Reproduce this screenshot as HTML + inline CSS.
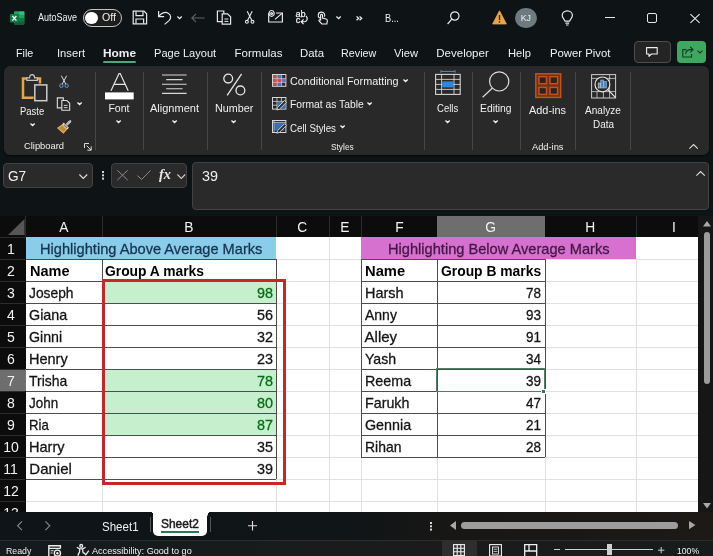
<!DOCTYPE html>
<html><head><meta charset="utf-8"><title>Excel</title>
<style>
*{box-sizing:border-box;margin:0;padding:0}
html,body{width:713px;height:556px;overflow:hidden;background:#0e1316;font-family:"Liberation Sans",sans-serif;color:#fff}
#app{will-change:transform;position:relative;width:713px;height:556px;overflow:hidden;background:#0e1316}
.a{position:absolute}
.t{position:absolute;white-space:nowrap;line-height:1;z-index:3}
svg{position:absolute;overflow:visible}
.sep{position:absolute;width:1px;background:#474747;top:72px;height:78px}
.fbox{position:absolute;background:#2a2a2a;border:1px solid #424242;border-radius:4px}
.gh{position:absolute;background:#e1e1e1;height:1px}
.gv{position:absolute;background:#e1e1e1;width:1px}
.bh{position:absolute;background:#4c4e4c;height:1.1px}
.bv{position:absolute;background:#4c4e4c;width:1.1px}
</style></head><body><div id="app">
<!-- ===== TITLE BAR ===== -->
<!-- excel logo -->
<svg style="left:10px;top:10.8px" width="14.8" height="14.4" viewBox="0 0 16 16" preserveAspectRatio="none">
  <rect x="4.5" y="0.5" width="11" height="14.5" rx="1.2" fill="#21a366"/>
  <rect x="4.5" y="0.5" width="5.5" height="3.7" fill="#21a366"/>
  <rect x="10" y="0.5" width="5.5" height="3.7" fill="#33c481"/>
  <rect x="4.5" y="4.2" width="5.5" height="3.6" fill="#107c41"/>
  <rect x="10" y="4.2" width="5.5" height="3.6" fill="#21a366"/>
  <rect x="4.5" y="7.8" width="5.5" height="3.6" fill="#185c37"/>
  <rect x="10" y="7.8" width="5.5" height="3.6" fill="#107c41"/>
  <rect x="4.5" y="11.4" width="11" height="3.6" fill="#185c37"/>
  <rect x="0" y="3.2" width="9.5" height="9.5" rx="1" fill="#107c41"/>
  <path d="M2.6 5.4 L6.9 10.6 M6.9 5.4 L2.6 10.6" stroke="#fff" stroke-width="1.4" fill="none"/>
</svg>
<!-- autosave toggle -->
<div class="a" style="left:82.5px;top:9.3px;width:39px;height:17.8px;border:1px solid #c4c4c4;border-radius:9px;background:#1d1d1d"></div>
<div class="a" style="left:85.2px;top:12px;width:12.6px;height:12.4px;border-radius:50%;background:#fff"></div>
<!-- save -->
<svg style="left:132px;top:10px" width="16" height="15" viewBox="0 0 16 15" fill="none" stroke="#e8e8e8" stroke-width="1.2">
  <path d="M1.2 1.2 H12 L14.6 3.8 V13.8 H1.2 Z"/>
  <path d="M4 1.4 V5.6 H11 V1.4"/>
  <path d="M4 13.6 V9 H11.6 V13.6"/>
</svg>
<!-- undo -->
<svg style="left:157px;top:10px" width="16" height="15" viewBox="0 0 16 15" fill="none" stroke="#e8e8e8" stroke-width="1.2">
  <path d="M1.6 1 V6.6 H7.2"/>
  <path d="M1.9 6.3 C4 3 8 1.4 11.2 3.2 C14.4 5 14.2 8.6 12 10.6 L7.6 14.4"/>
</svg>
<svg style="left:176.6px;top:16px" width="5.2" height="3.6" viewBox="0 0 6 4" fill="none" stroke="#f0f0f0" stroke-width="1.5"><path d="M0.5 0.6 L3 3 L5.5 0.6"/></svg>
<!-- back arrow (dim) -->
<svg style="left:191px;top:13px" width="14" height="10" viewBox="0 0 14 10" fill="none" stroke="#5e6366" stroke-width="1.1"><path d="M13.6 5 H0.9 M5 0.8 L0.8 5 L5 9.2"/></svg>
<!-- copy/paste doc -->
<svg style="left:216px;top:10px" width="16" height="15" viewBox="0 0 16 15" fill="none" stroke="#e8e8e8" stroke-width="1.2">
  <path d="M6 11.6 H1.4 V1 H7.8 V3.4"/>
  <path d="M6.2 3.8 H11.6 L14.6 6.8 V14.2 H6.2 Z"/>
  <path d="M8.4 9 H12.4 M8.4 11.4 H12.4" stroke-width="1"/>
</svg>
<!-- scissors -->
<svg style="left:245px;top:11.4px" width="9.4" height="13" viewBox="0 0 9.4 13" fill="none" stroke="#e8e8e8" stroke-width="1.1">
  <path d="M2.2 0.3 L6.9 9.4 M7.2 0.3 L2.5 9.4"/>
  <circle cx="1.9" cy="10.8" r="1.45"/><circle cx="7.5" cy="10.8" r="1.45"/>
</svg>
<!-- email -->
<svg style="left:268px;top:10px" width="15" height="13" viewBox="0 0 15 13" fill="none" stroke="#e8e8e8" stroke-width="1.2">
  <path d="M0.7 3 V12 H14.4 V3 H8"/>
  <path d="M7 9.4 L14 3.4"/>
  <ellipse cx="3.6" cy="3.4" rx="2.6" ry="2.9"/>
  <circle cx="3.6" cy="3.6" r="0.9"/>
</svg>
<!-- abc spelling -->
<div class="t" style="left:295.6px;top:9.6px;font-size:9.2px;color:#f0f0f0;letter-spacing:-0.3px;-webkit-text-stroke:0.25px #f0f0f0">ab</div>
<div class="t" style="left:295.8px;top:16.4px;font-size:9.2px;color:#f0f0f0;-webkit-text-stroke:0.25px #f0f0f0">c</div>
<svg style="left:300.4px;top:16px" width="8.4" height="9" viewBox="0 0 9 10" fill="none" stroke="#f0f0f0" stroke-width="1.3">
  <path d="M6.5 0 C8.6 2 8.4 5.6 5.2 6.4 H1.4 M3.8 3.8 L1.2 6.4 L3.8 9"/>
</svg>
<!-- touch -->
<svg style="left:317.4px;top:10.6px" width="11.2" height="14" viewBox="0 0 13 15" fill="none" stroke="#f0f0f0" stroke-width="1.3">
  <path d="M3.2 7.8 C0.2 5.6 1 0.8 5 0.7 C8.6 0.6 9.8 4 8.4 6"/>
  <path d="M4.2 10.4 V4.4 C4.2 3 6.4 3 6.4 4.4 V7.6 L10.6 8.6 C12 9 12.2 10 12 11.2 L11.4 14.4 H5.6 L2.4 10.8 C1.8 9.8 3.2 9.2 4.2 10.4"/>
</svg>
<svg style="left:336px;top:16px" width="5.2" height="3.6" viewBox="0 0 6 4" fill="none" stroke="#f0f0f0" stroke-width="1.5"><path d="M0.5 0.6 L3 3 L5.5 0.6"/></svg>
<svg style="left:355.6px;top:16.2px" width="6.6" height="4.6" viewBox="0 0 7 5" fill="none" stroke="#f0f0f0" stroke-width="1.4"><path d="M0.5 0.4 L2.8 2.5 L0.5 4.6 M3.8 0.4 L6.1 2.5 L3.8 4.6"/></svg>
<!-- search -->
<svg style="left:447px;top:11px" width="13" height="14" viewBox="0 0 13 14" fill="none" stroke="#e8e8e8" stroke-width="1.2">
  <circle cx="7.8" cy="5" r="4.2"/><path d="M4.8 8.2 L0.6 13"/>
</svg>
<!-- warning -->
<svg style="left:492px;top:10px" width="15" height="15" viewBox="0 0 15 15">
  <path d="M7.5 0.8 L14.4 14 H0.6 Z" fill="#eaa646" stroke="#eaa646" stroke-width="0.8" stroke-linejoin="round"/>
  <rect x="6.8" y="5" width="1.4" height="5.2" fill="#3a2a10"/><rect x="6.8" y="11.2" width="1.4" height="1.5" fill="#3a2a10"/>
</svg>
<!-- avatar -->
<div class="a" style="left:515.3px;top:7.6px;width:21.4px;height:20.8px;border-radius:50%;background:#6d7b80"></div>
<!-- lightbulb -->
<svg style="left:561px;top:10px" width="13" height="16" viewBox="0 0 13 16" fill="none" stroke="#e8e8e8" stroke-width="1.2">
  <path d="M4 11.2 C3.6 9 1.2 8.2 1.2 5.6 C1.2 2.8 3.4 0.8 6.3 0.8 C9.2 0.8 11.4 2.8 11.4 5.6 C11.4 8.2 9 9 8.6 11.2 Z"/>
  <path d="M4.4 13.2 H8.2 M5 15 H7.6"/>
</svg>
<!-- window controls -->
<div class="a" style="left:604.5px;top:16.8px;width:10px;height:1.1px;background:#e8e8e8"></div>
<div class="a" style="left:646.6px;top:13.1px;width:10.4px;height:9.8px;border:1.2px solid #e8e8e8;border-radius:2px"></div>
<svg style="left:690px;top:13.5px" width="10" height="9" viewBox="0 0 10 9" fill="none" stroke="#e8e8e8" stroke-width="1.1"><path d="M0.4 0.2 L9.6 8.8 M9.6 0.2 L0.4 8.8"/></svg>

<!-- ===== TABS ===== -->
<div class="a" style="left:103px;top:61.1px;width:33.2px;height:1.9px;background:#53a478;border-radius:1px"></div>
<div class="a" style="left:633.5px;top:41.4px;width:37.5px;height:21.6px;border:1px solid #4e4e4e;border-radius:4px;background:#242424"></div>
<svg style="left:646px;top:47px" width="12" height="10" viewBox="0 0 12 10" fill="none" stroke="#f0f0f0" stroke-width="1.1"><path d="M0.6 0.6 H11.2 V7 H5.4 L3 9.4 V7 H0.6 Z" stroke-linejoin="round"/></svg>
<div class="a" style="left:677.4px;top:41.4px;width:28.2px;height:21.6px;border-radius:4px;background:#3fa860"></div>
<svg style="left:682px;top:46px" width="12" height="12" viewBox="0 0 12 12" fill="none" stroke="#143a22" stroke-width="1.1"><path d="M4.4 3.6 H0.8 V11 H9.6 V8"/><path d="M3.6 8 C4 5.4 6 3.6 8.6 3.6 H10.6 M8.2 0.8 L11 3.6 L8.2 6.4"/></svg>
<svg style="left:696.5px;top:50px" width="6" height="4" viewBox="0 0 6 4" fill="none" stroke="#143a22" stroke-width="1.1"><path d="M0.5 0.6 L3 3 L5.5 0.6"/></svg>

<!-- ===== RIBBON ===== -->
<div class="a" style="left:3.5px;top:66.3px;width:705.5px;height:88.4px;background:#292929;border-radius:6px;box-shadow:0 1px 2px rgba(0,0,0,.55)"></div>
<div class="sep" style="left:94.5px"></div>
<div class="sep" style="left:143px"></div>
<div class="sep" style="left:206.8px"></div>
<div class="sep" style="left:261.2px"></div>
<div class="sep" style="left:423.6px"></div>
<div class="sep" style="left:471.6px"></div>
<div class="sep" style="left:519.6px"></div>
<div class="sep" style="left:575.4px"></div>
<div class="sep" style="left:630.4px"></div>
<!-- paste icon -->
<svg style="left:20px;top:72px" width="29" height="31" viewBox="0 0 29 31" fill="none">
  <path d="M7.4 6.6 H3 V25.8 H13.6" stroke="#e6a646" stroke-width="2.5"/>
  <path d="M16.6 6.6 H20 V11.6" stroke="#e6a646" stroke-width="2.5"/>
  <path d="M6.8 8.4 V5.8 H9.6 C9.6 1.6 14.6 1.6 14.6 5.8 H17.4 V8.4 Z" stroke="#c4c4c4" stroke-width="1.2" fill="#292929"/>
  <rect x="14.8" y="12.9" width="12" height="15.8" stroke="#cccccc" stroke-width="1.5" fill="#292929"/>
</svg>
<svg style="left:29.5px;top:123px" width="5.2" height="3.4" viewBox="0 0 6 4" fill="none" stroke="#f2f2f2" stroke-width="1.6"><path d="M0.5 0.6 L3 3 L5.5 0.6"/></svg>
<!-- scissors small -->
<svg style="left:58.6px;top:74.6px" width="10" height="13.4" viewBox="0 0 11 14" fill="none" stroke-width="1.1">
  <path d="M2.6 0.4 L7.6 10 M8.4 0.4 L3.4 10" stroke="#dcdcdc"/>
  <circle cx="2.6" cy="11.4" r="1.9" stroke="#5aa0d8"/><circle cx="8.4" cy="11.4" r="1.9" stroke="#5aa0d8"/>
</svg>
<!-- copy small -->
<svg style="left:55.6px;top:96.6px" width="15" height="14" viewBox="0 0 16 15" fill="none" stroke="#dcdcdc" stroke-width="1.2">
  <path d="M6 11.6 H1.4 V1 H7.8 V3.4"/>
  <path d="M6.2 3.8 H11.6 L14.6 6.8 V14.2 H6.2 Z"/>
  <path d="M8.4 9 H12.4 M8.4 11.4 H12.4" stroke-width="1"/>
</svg>
<svg style="left:77.3px;top:102.3px" width="5.2" height="3.4" viewBox="0 0 6 4" fill="none" stroke="#f2f2f2" stroke-width="1.6"><path d="M0.5 0.6 L3 3 L5.5 0.6"/></svg>
<!-- format painter -->
<svg style="left:56.5px;top:119.5px" width="14.5" height="13.5" viewBox="0 0 15 14" fill="none" stroke-width="1.1">
  <path d="M9.4 4.6 L13 1 C13.8 0.2 14.8 1.2 14 2 L10.4 5.6" stroke="#dcdcdc"/>
  <path d="M7 3.4 L11.6 8 L10.4 9.2 L5.8 4.6 Z" stroke="#dcdcdc"/>
  <path d="M5.4 5 L0.8 8.4 L6.6 13.4 L10 9.6 Z" stroke="#e6b04e" fill="#e6b04e" fill-opacity="0.75"/>
</svg>
<!-- dialog launcher -->
<svg style="left:84px;top:143px" width="8" height="8" viewBox="0 0 8 8" fill="none" stroke="#dcdcdc" stroke-width="1"><path d="M0.5 5 V0.5 H5 M2.6 2.6 L7 7 M7.2 3.4 V7.2 H3.4"/></svg>
<!-- font icon -->
<svg style="left:104.6px;top:72.5px" width="29" height="27" viewBox="0 0 29 27" fill="none">
  <path d="M6 17.8 L14 0.6 H15.2 L23.2 17.8 M9.2 11.4 H20" stroke="#e6e6e6" stroke-width="1.2"/>
  <rect x="0" y="19.4" width="28.7" height="7" fill="#ffffff"/>
</svg>
<svg style="left:116.2px;top:120.2px" width="5.2" height="3.4" viewBox="0 0 6 4" fill="none" stroke="#f2f2f2" stroke-width="1.6"><path d="M0.5 0.6 L3 3 L5.5 0.6"/></svg>
<!-- alignment icon -->
<svg style="left:162.4px;top:74px" width="25" height="21" viewBox="0 0 25 21" fill="none" stroke="#d8d8d8" stroke-width="1.1">
  <path d="M0 1 H24.6 M4.2 5.6 H20.6 M0 10.2 H24.6 M4.2 14.8 H20.6 M0 19.4 H24.6"/>
</svg>
<svg style="left:171.8px;top:120.2px" width="5.2" height="3.4" viewBox="0 0 6 4" fill="none" stroke="#f2f2f2" stroke-width="1.6"><path d="M0.5 0.6 L3 3 L5.5 0.6"/></svg>
<!-- number % -->
<svg style="left:223px;top:73px" width="23" height="23" viewBox="0 0 23 23" fill="none" stroke="#e6e6e6" stroke-width="1.3">
  <circle cx="5.2" cy="5.6" r="4.4"/><circle cx="17.4" cy="17.4" r="4.4"/><path d="M18.6 0.8 L4.2 22.4"/>
</svg>
<svg style="left:231.4px;top:120.2px" width="5.2" height="3.4" viewBox="0 0 6 4" fill="none" stroke="#f2f2f2" stroke-width="1.6"><path d="M0.5 0.6 L3 3 L5.5 0.6"/></svg>
<!-- conditional formatting icon -->
<svg style="left:271.8px;top:73.8px" width="14.4" height="12.8" viewBox="0 0 14.4 12.8" fill="none">
  <rect x="0.5" y="0.5" width="13.4" height="11.8" stroke="#d8d8d8" stroke-width="1" fill="#2f2f2f"/>
  <rect x="1" y="1" width="4" height="3.4" fill="#d64550"/><rect x="5.4" y="1" width="4" height="3.4" fill="#4a78c0"/>
  <rect x="1" y="4.8" width="4" height="3.4" fill="#d64550"/><rect x="5.4" y="4.8" width="4" height="3.4" fill="#d64550"/><rect x="9.8" y="4.8" width="3.6" height="3.4" fill="#4a78c0"/>
  <rect x="1" y="8.6" width="4" height="3.2" fill="#d64550"/><rect x="5.4" y="8.6" width="4" height="3.2" fill="#4a78c0"/>
  <path d="M5.2 0.5 V12.3 M9.6 0.5 V12.3 M0.5 4.6 H13.9 M0.5 8.4 H13.9" stroke="#d8d8d8" stroke-width="0.7"/>
</svg>
<svg style="left:402.7px;top:78.6px" width="5.2" height="3.4" viewBox="0 0 6 4" fill="none" stroke="#f2f2f2" stroke-width="1.6"><path d="M0.5 0.6 L3 3 L5.5 0.6"/></svg>
<!-- format as table icon -->
<svg style="left:271.8px;top:97.2px" width="14.4" height="13" viewBox="0 0 14.4 13" fill="none">
  <rect x="0.5" y="0.5" width="13.4" height="11.6" stroke="#d8d8d8" stroke-width="1"/>
  <path d="M5 0.5 V12 M9.4 0.5 V6 M0.5 4.4 H13.9 M0.5 8.2 H8" stroke="#d8d8d8" stroke-width="0.8"/>
  <rect x="5.4" y="4.8" width="8" height="6.8" fill="#3b78c4" fill-opacity="0.9"/>
  <path d="M12.6 3.6 L14.4 5.4 L7.4 12.2 L4.8 13 L5.6 10.4 Z" fill="#292929" stroke="#e0e0e0" stroke-width="0.9"/>
</svg>
<svg style="left:367.3px;top:101.6px" width="5.2" height="3.4" viewBox="0 0 6 4" fill="none" stroke="#f2f2f2" stroke-width="1.6"><path d="M0.5 0.6 L3 3 L5.5 0.6"/></svg>
<!-- cell styles icon -->
<svg style="left:271.8px;top:120.2px" width="14.4" height="13.4" viewBox="0 0 14.4 13.4" fill="none">
  <rect x="0.5" y="0.5" width="13.4" height="12" stroke="#d8d8d8" stroke-width="1"/>
  <rect x="2.2" y="2.6" width="10" height="8" fill="#3b78c4" fill-opacity="0.9"/>
  <path d="M0.5 2.4 H13.9 M2 0.5 V12.5" stroke="#d8d8d8" stroke-width="0.7"/>
  <path d="M12.6 3.8 L14.4 5.6 L7.4 12.4 L4.8 13.2 L5.6 10.6 Z" fill="#292929" stroke="#e0e0e0" stroke-width="0.9"/>
</svg>
<svg style="left:340.3px;top:125px" width="5.2" height="3.4" viewBox="0 0 6 4" fill="none" stroke="#f2f2f2" stroke-width="1.6"><path d="M0.5 0.6 L3 3 L5.5 0.6"/></svg>
<!-- cells icon -->
<svg style="left:435px;top:70px" width="26" height="25" viewBox="0 0 26 25" fill="none">
  <path d="M6 1.4 H20 M6 0 V2.8 M20 0 V2.8" stroke="#4a9be0" stroke-width="0.9"/>
  <rect x="0.6" y="4.4" width="24.6" height="20" stroke="#d4d4d4" stroke-width="1.1"/>
  <path d="M0.6 9.4 H25.2 M0.6 14.4 H25.2 M0.6 19.4 H25.2 M6.6 4.4 V24.4 M19 4.4 V24.4" stroke="#d4d4d4" stroke-width="0.9"/>
  <rect x="7.2" y="11.4" width="11" height="6" fill="#2f86dc"/>
</svg>
<svg style="left:444.8px;top:120.2px" width="5.2" height="3.4" viewBox="0 0 6 4" fill="none" stroke="#f2f2f2" stroke-width="1.6"><path d="M0.5 0.6 L3 3 L5.5 0.6"/></svg>
<!-- editing icon -->
<svg style="left:482px;top:71px" width="28" height="27" viewBox="0 0 28 27" fill="none" stroke="#dcdcdc" stroke-width="1.2">
  <circle cx="17.2" cy="10.4" r="9.6"/><path d="M10.2 17.2 L0.6 26.2"/>
</svg>
<svg style="left:492.8px;top:120.2px" width="5.2" height="3.4" viewBox="0 0 6 4" fill="none" stroke="#f2f2f2" stroke-width="1.6"><path d="M0.5 0.6 L3 3 L5.5 0.6"/></svg>
<!-- add-ins icon -->
<svg style="left:535px;top:73.4px" width="26.5" height="25.2" viewBox="0 0 26.5 25.2" fill="none" stroke="#c6501d" stroke-width="1.5">
  <rect x="0.8" y="0.8" width="24.9" height="23.6" fill="#6e3119"/>
  <rect x="3.9" y="3.7" width="7.6" height="7" fill="#2b2321"/><rect x="15" y="3.7" width="7.6" height="7" fill="#2b2321"/>
  <rect x="3.9" y="14.4" width="7.6" height="7" fill="#2b2321"/><rect x="15" y="14.4" width="7.6" height="7" fill="#2b2321"/>
</svg>
<!-- analyze data icon -->
<svg style="left:590.8px;top:73.6px" width="25.4" height="24.8" viewBox="0 0 25.4 24.8" fill="none">
  <rect x="0.6" y="0.6" width="24" height="23.4" stroke="#cfcfcf" stroke-width="1"/>
  <path d="M0.6 4.4 H24.6 M0.6 17.6 H24.6 M18.6 0.6 V24 M6 17.6 V24 M12.4 17.6 V24" stroke="#cfcfcf" stroke-width="0.8"/>
  <circle cx="11.4" cy="10.4" r="7.4" fill="#292929" stroke="#e4e4e4" stroke-width="1.2"/>
  <path d="M16.8 15.6 L24.6 23.6" stroke="#e4e4e4" stroke-width="1.3"/>
  <rect x="7.2" y="9" width="2.4" height="5" fill="#d8d8d8" fill-opacity="0.5" stroke="#d8d8d8" stroke-width="0.6"/>
  <rect x="9.8" y="6" width="2.6" height="8" fill="#3b86d8" stroke="#d8d8d8" stroke-width="0.5"/>
  <rect x="12.8" y="7.6" width="2.6" height="6.4" fill="#3b86d8" stroke="#d8d8d8" stroke-width="0.5"/>
</svg>
<svg style="left:689.3px;top:143.6px" width="9.2" height="5" viewBox="0 0 9.2 5" fill="none" stroke="#e0e0e0" stroke-width="1.1"><path d="M0.4 4.6 L4.6 0.6 L8.8 4.6"/></svg>

<!-- ===== FORMULA BAR ===== -->
<div class="fbox" style="left:3.4px;top:162.6px;width:89.8px;height:25.2px"></div>
<svg style="left:79.4px;top:173.8px" width="8.6" height="5" viewBox="0 0 8.6 5" fill="none" stroke="#e0e0e0" stroke-width="1.1"><path d="M0.4 0.5 L4.3 4.4 L8.2 0.5"/></svg>
<div class="a" style="left:101.5px;top:171px;width:2px;height:2px;background:#d8d8d8;box-shadow:0 3.3px 0 #d8d8d8,0 6.6px 0 #d8d8d8"></div>
<div class="fbox" style="left:111.4px;top:162.6px;width:75.8px;height:25.2px"></div>
<svg style="left:117.3px;top:170.2px" width="11" height="10.4" viewBox="0 0 11 10.4" fill="none" stroke="#8c8c8c" stroke-width="1"><path d="M0.3 0.3 L10.7 10.1 M10.7 0.3 L0.3 10.1"/></svg>
<svg style="left:136.6px;top:170.4px" width="14" height="10" viewBox="0 0 14 10" fill="none" stroke="#8c8c8c" stroke-width="1"><path d="M0.4 5.6 L4.6 9.4 L13.6 0.4"/></svg>
<svg style="left:176.7px;top:173.8px" width="8.6" height="5" viewBox="0 0 8.6 5" fill="none" stroke="#cfcfcf" stroke-width="1.1"><path d="M0.4 0.5 L4.3 4.4 L8.2 0.5"/></svg>
<div class="fbox" style="left:191.6px;top:162.4px;width:517px;height:47.6px"></div>
<svg style="left:696px;top:171px" width="9.2" height="5" viewBox="0 0 9.2 5" fill="none" stroke="#e0e0e0" stroke-width="1.1"><path d="M0.4 4.6 L4.6 0.6 L8.8 4.6"/></svg>

<!-- ===== GRID ===== -->
<div class="a" style="left:0;top:216px;width:713px;height:296px;background:#0c0c0c"></div>
<div class="a" style="left:26px;top:237px;width:672px;height:274.6px;background:#fff"></div>
<!-- header seps -->
<div class="a" style="left:25.4px;top:216px;width:1px;height:21px;background:#2c2c2c"></div>
<div class="a" style="left:101.6px;top:216px;width:1px;height:21px;background:#2c2c2c"></div>
<div class="a" style="left:275.6px;top:216px;width:1px;height:21px;background:#2c2c2c"></div>
<div class="a" style="left:328.8px;top:216px;width:1px;height:21px;background:#2c2c2c"></div>
<div class="a" style="left:360.8px;top:216px;width:1px;height:21px;background:#2c2c2c"></div>
<div class="a" style="left:636px;top:216px;width:1px;height:21px;background:#2c2c2c"></div>
<div class="a" style="left:437px;top:216px;width:108px;height:20.5px;background:#6e6e6e"></div>
<div class="a" style="left:0;top:369px;width:25.4px;height:22px;background:#6e6e6e"></div>
<div class="a" style="left:24.8px;top:369px;width:1.2px;height:22px;background:#4f8a68"></div>
<!-- select all triangle -->
<svg style="left:7.5px;top:219px" width="16.5" height="16" viewBox="0 0 18 14" preserveAspectRatio="none"><path d="M18 0 V14 H0 Z" fill="#565656"/></svg>
<!-- row header seps -->
<div id="rhs"></div>
<!-- fills -->
<div class="a" style="left:26.2px;top:237.4px;width:249.6px;height:21.6px;background:#8acdea"></div>
<div class="a" style="left:361.4px;top:237.4px;width:275px;height:21.6px;background:#d671cf"></div>
<div class="a" style="left:102px;top:281px;width:174px;height:22px;background:#c6efce"></div>
<div class="a" style="left:102px;top:369px;width:174px;height:66px;background:#c6efce"></div>
<div class="gh" style="left:26px;top:258.9px;width:672px"></div>
<div class="gh" style="left:26px;top:280.9px;width:672px"></div>
<div class="gh" style="left:26px;top:302.9px;width:672px"></div>
<div class="gh" style="left:26px;top:324.9px;width:672px"></div>
<div class="gh" style="left:26px;top:346.9px;width:672px"></div>
<div class="gh" style="left:26px;top:368.9px;width:672px"></div>
<div class="gh" style="left:26px;top:390.9px;width:672px"></div>
<div class="gh" style="left:26px;top:412.9px;width:672px"></div>
<div class="gh" style="left:26px;top:434.9px;width:672px"></div>
<div class="gh" style="left:26px;top:456.9px;width:672px"></div>
<div class="gh" style="left:26px;top:478.9px;width:672px"></div>
<div class="gh" style="left:26px;top:500.9px;width:672px"></div>
<div class="gv" style="left:101.5px;top:259px;height:252.6px"></div>
<div class="gv" style="left:275.5px;top:259px;height:252.6px"></div>
<div class="gv" style="left:328.5px;top:259px;height:252.6px"></div>
<div class="gv" style="left:360.5px;top:259px;height:252.6px"></div>
<div class="gv" style="left:436.5px;top:259px;height:252.6px"></div>
<div class="gv" style="left:544.5px;top:259px;height:252.6px"></div>
<div class="gv" style="left:635.5px;top:259px;height:252.6px"></div>
<div class="gv" style="left:328.5px;top:237px;height:22px"></div>
<div class="a" style="left:0;top:236.5px;width:25.4px;height:1px;background:#2c2c2c"></div>
<div class="a" style="left:0;top:258.5px;width:25.4px;height:1px;background:#2c2c2c"></div>
<div class="a" style="left:0;top:280.5px;width:25.4px;height:1px;background:#2c2c2c"></div>
<div class="a" style="left:0;top:302.5px;width:25.4px;height:1px;background:#2c2c2c"></div>
<div class="a" style="left:0;top:324.5px;width:25.4px;height:1px;background:#2c2c2c"></div>
<div class="a" style="left:0;top:346.5px;width:25.4px;height:1px;background:#2c2c2c"></div>
<div class="a" style="left:0;top:368.5px;width:25.4px;height:1px;background:#2c2c2c"></div>
<div class="a" style="left:0;top:390.5px;width:25.4px;height:1px;background:#2c2c2c"></div>
<div class="a" style="left:0;top:412.5px;width:25.4px;height:1px;background:#2c2c2c"></div>
<div class="a" style="left:0;top:434.5px;width:25.4px;height:1px;background:#2c2c2c"></div>
<div class="a" style="left:0;top:456.5px;width:25.4px;height:1px;background:#2c2c2c"></div>
<div class="a" style="left:0;top:478.5px;width:25.4px;height:1px;background:#2c2c2c"></div>
<div class="a" style="left:0;top:500.5px;width:25.4px;height:1px;background:#2c2c2c"></div>
<div class="bh" style="left:26px;top:258.7px;width:250px"></div>
<div class="bh" style="left:26px;top:280.7px;width:250px"></div>
<div class="bh" style="left:26px;top:302.7px;width:250px"></div>
<div class="bh" style="left:26px;top:324.7px;width:250px"></div>
<div class="bh" style="left:26px;top:346.7px;width:250px"></div>
<div class="bh" style="left:26px;top:368.7px;width:250px"></div>
<div class="bh" style="left:26px;top:390.7px;width:250px"></div>
<div class="bh" style="left:26px;top:412.7px;width:250px"></div>
<div class="bh" style="left:26px;top:434.7px;width:250px"></div>
<div class="bh" style="left:26px;top:456.7px;width:250px"></div>
<div class="bh" style="left:26px;top:478.7px;width:250px"></div>
<div class="bv" style="left:101.5px;top:259px;height:220px"></div>
<div class="bv" style="left:275.5px;top:259px;height:220px"></div>
<div class="bh" style="left:361px;top:258.7px;width:184px"></div>
<div class="bh" style="left:361px;top:280.7px;width:184px"></div>
<div class="bh" style="left:361px;top:302.7px;width:184px"></div>
<div class="bh" style="left:361px;top:324.7px;width:184px"></div>
<div class="bh" style="left:361px;top:346.7px;width:184px"></div>
<div class="bh" style="left:361px;top:368.7px;width:184px"></div>
<div class="bh" style="left:361px;top:390.7px;width:184px"></div>
<div class="bh" style="left:361px;top:412.7px;width:184px"></div>
<div class="bh" style="left:361px;top:434.7px;width:184px"></div>
<div class="bh" style="left:361px;top:456.7px;width:184px"></div>
<div class="bv" style="left:361.0px;top:259px;height:198px"></div>
<div class="bv" style="left:436.5px;top:259px;height:198px"></div>
<div class="bv" style="left:544.5px;top:259px;height:198px"></div>
<div class="a" style="left:102.2px;top:278.7px;width:184.2px;height:206.2px;border:3.2px solid #c9252d"></div>
<div class="a" style="left:436.4px;top:368.4px;width:109px;height:23.2px;border:1.3px solid #4f8064"></div>
<div class="a" style="left:541.4px;top:388.6px;width:5px;height:5px;background:#3f7457;border:0.6px solid #fff"></div>
<div class="a" style="left:698px;top:216px;width:15px;height:296px;background:#161616"></div>
<svg style="left:703.4px;top:220.6px" width="8" height="5.4" viewBox="0 0 8 5.4"><path d="M4 0 L8 5.4 H0 Z" fill="#a8a8a8"/></svg>
<div class="a" style="left:703.7px;top:231.7px;width:6.6px;height:152px;background:#9b9b9b;border-radius:3.3px"></div>
<svg style="left:703.2px;top:503.4px" width="8" height="5.4" viewBox="0 0 8 5.4"><path d="M0 0 H8 L4 5.4 Z" fill="#a8a8a8"/></svg>
<div class="a" style="left:0;top:511.6px;width:713px;height:28.4px;z-index:2;background:linear-gradient(90deg,#0e1417 0%,#101517 48%,#191715 66%,#1c1917 100%)"></div>
<div class="a" style="left:0;top:540px;width:713px;height:16px;z-index:2;border-top:1px solid #2b2d2e;background:linear-gradient(90deg,#141a1d 0%,#181b1c 35%,#1b1b1b 60%,#181b1c 100%)"></div>
<div class="a" style="z-index:2;left:153.2px;top:511px;width:53.8px;height:25.4px;background:#fff;border-radius:0 0 5px 5px"></div>
<div class="a" style="z-index:2;left:160.8px;top:530.8px;width:38px;height:2px;background:#2b7a52"></div>
<div class="a" style="z-index:2;left:149.8px;top:517.4px;width:1px;height:15px;background:#555"></div>
<div class="a" style="z-index:2;left:210px;top:517.4px;width:1px;height:15px;background:#555"></div>
<svg style="z-index:2;left:17.2px;top:520.6px" width="5.4" height="9.6" viewBox="0 0 5.4 9.6" fill="none" stroke="#8a8a8a" stroke-width="1.1"><path d="M5 0.4 L0.6 4.8 L5 9.2"/></svg>
<svg style="z-index:2;left:45.4px;top:520.6px" width="5.4" height="9.6" viewBox="0 0 5.4 9.6" fill="none" stroke="#8a8a8a" stroke-width="1.1"><path d="M0.4 0.4 L4.8 4.8 L0.4 9.2"/></svg>
<svg style="z-index:2;left:248.2px;top:520.6px" width="9" height="9.4" viewBox="0 0 9 9.4" fill="none" stroke="#e0e0e0" stroke-width="1.1"><path d="M4.5 0 V9.4 M0 4.7 H9"/></svg>
<div class="a" style="z-index:2;left:430.4px;top:522px;width:2px;height:2px;background:#d8d8d8;box-shadow:0 3.3px 0 #d8d8d8,0 6.6px 0 #d8d8d8"></div>
<svg style="z-index:2;left:450px;top:521px" width="6" height="9" viewBox="0 0 6 9"><path d="M6 0 V9 L0 4.5 Z" fill="#a8a8a8"/></svg>
<div class="a" style="z-index:2;left:461px;top:521.7px;width:217.4px;height:7.2px;background:#9d9d9d;border-radius:3.6px"></div>
<svg style="z-index:2;left:688.8px;top:521.2px" width="6.4" height="8.2" viewBox="0 0 6.4 8.2"><path d="M0 0 L6.4 4.1 L0 8.2 Z" fill="#a8a8a8"/></svg>
<svg style="z-index:2;left:47.8px;top:545px" width="14" height="12" viewBox="0 0 14 12" fill="none" stroke="#ececec" stroke-width="1.4"><path d="M0.8 11.4 V0.8 H12.4 V3.6 M0.8 3.4 H12.4"/><path d="M2.6 5.8 H5.6 M2.6 8 H4.6" stroke-width="1.1"/><circle cx="9.4" cy="8.2" r="3.1"/><circle cx="9.4" cy="8.2" r="1.2" fill="#ececec" stroke="none"/></svg>
<svg style="z-index:2;left:75.6px;top:544.2px" width="13.4" height="12" viewBox="0 0 13 12" fill="none" stroke="#ececec" stroke-width="1.3"><circle cx="5" cy="1.9" r="1.4"/><path d="M0.6 3.2 L3.4 4.8 H6.6 L9.4 3.2 M3.4 4.8 V7.8 L1.6 11.6 M6.6 4.8 V7.8 L7.4 9.4"/><path d="M7.8 8.8 L9.6 10.8 L12.6 6.6"/></svg>
<div class="a" style="z-index:2;left:442px;top:540.4px;width:35.4px;height:15.6px;background:#2e2e2e"></div>
<svg style="z-index:2;left:453.4px;top:544px" width="12" height="12" viewBox="0 0 12 12" fill="none" stroke="#f0f0f0" stroke-width="1.1"><rect x="0.6" y="0.6" width="10.8" height="11"/><path d="M4.2 0.6 V12 M7.8 0.6 V12 M0.6 4.2 H11.4 M0.6 7.8 H11.4"/></svg>
<svg style="z-index:2;left:488.8px;top:544px" width="13" height="12" viewBox="0 0 13 12" fill="none" stroke="#f0f0f0" stroke-width="1.1"><rect x="0.6" y="0.6" width="11.8" height="11.4"/><rect x="3.5" y="3" width="6" height="7" stroke-width="0.9"/><path d="M4.6 5.2 H8.4 M4.6 7.4 H8.4" stroke-width="0.8"/></svg>
<svg style="z-index:2;left:524.2px;top:544px" width="13.4" height="12" viewBox="0 0 13.4 12" fill="none" stroke="#f0f0f0" stroke-width="1.1"><path d="M0.7 12 V0.7 H12.7 V12 M0.7 7 H12.7 M5 0.7 V7" stroke-width="1.3"/></svg>
<div class="a" style="z-index:2;left:553.8px;top:549.2px;width:6.4px;height:1px;background:#cfcfcf"></div>
<div class="a" style="z-index:2;left:565.3px;top:549.2px;width:87.8px;height:1px;background:#cfcfcf"></div>
<div class="a" style="z-index:2;left:607.2px;top:544.4px;width:4.6px;height:11px;background:#cfcfcf"></div>
<svg style="z-index:2;left:658.2px;top:546.6px" width="6.4" height="6.4" viewBox="0 0 6.4 6.4" fill="none" stroke="#cfcfcf" stroke-width="1"><path d="M3.2 0 V6.4 M0 3.2 H6.4"/></svg>
<div class="a" style="z-index:2;left:148.7px;top:511.6px;width:4.5px;height:4.5px;background:radial-gradient(circle at 0% 100%,#0f1417 4.3px,#ffffff 4.8px)"></div>
<div class="a" style="z-index:2;left:207px;top:511.6px;width:4.5px;height:4.5px;background:radial-gradient(circle at 100% 100%,#0f1417 4.3px,#ffffff 4.8px)"></div>

<!-- TEXT -->
<div class="t" style="left:38.40px;top:13.43px;font-size:10px;color:#f0f0f0;transform:scaleX(0.8991);transform-origin:left center;">AutoSave</div>
<div class="t" style="left:102.00px;top:13.43px;font-size:10px;color:#f0f0f0;transform:scaleX(1.0641);transform-origin:left center;">Off</div>
<div class="t" style="left:384.50px;top:13.11px;font-size:10.5px;color:#f0f0f0;transform:scaleX(0.8817);transform-origin:left center;">B...</div>
<div class="t" style="left:520.66px;top:13.95px;font-size:8.8px;color:#eef2f3;">KJ</div>
<div class="t" style="left:15.50px;top:48.47px;font-size:11.5px;color:#f0f0f0;transform:scaleX(0.9336);transform-origin:left center;">File</div>
<div class="t" style="left:56.70px;top:48.47px;font-size:11.5px;color:#f0f0f0;transform:scaleX(0.9734);transform-origin:left center;">Insert</div>
<div class="t" style="left:103.00px;top:48.47px;font-size:11.5px;color:#f0f0f0;font-weight:bold;transform:scaleX(1.0328);transform-origin:left center;">Home</div>
<div class="t" style="left:153.50px;top:48.47px;font-size:11.5px;color:#f0f0f0;transform:scaleX(0.9629);transform-origin:left center;">Page Layout</div>
<div class="t" style="left:234.60px;top:48.47px;font-size:11.5px;color:#f0f0f0;">Formulas</div>
<div class="t" style="left:299.50px;top:48.47px;font-size:11.5px;color:#f0f0f0;transform:scaleX(0.9878);transform-origin:left center;">Data</div>
<div class="t" style="left:340.70px;top:48.47px;font-size:11.5px;color:#f0f0f0;transform:scaleX(0.9359);transform-origin:left center;">Review</div>
<div class="t" style="left:393.80px;top:48.47px;font-size:11.5px;color:#f0f0f0;transform:scaleX(0.9709);transform-origin:left center;">View</div>
<div class="t" style="left:436.30px;top:48.47px;font-size:11.5px;color:#f0f0f0;">Developer</div>
<div class="t" style="left:508.00px;top:48.47px;font-size:11.5px;color:#f0f0f0;transform:scaleX(0.9723);transform-origin:left center;">Help</div>
<div class="t" style="left:549.50px;top:48.47px;font-size:11.5px;color:#f0f0f0;transform:scaleX(0.9860);transform-origin:left center;">Power Pivot</div>
<div class="t" style="left:20.00px;top:105.71px;font-size:10.5px;color:#f0f0f0;transform:scaleX(0.9010);transform-origin:left center;">Paste</div>
<div class="t" style="left:23.60px;top:141.30px;font-size:9.8px;color:#f0f0f0;transform:scaleX(0.9538);transform-origin:left center;">Clipboard</div>
<div class="t" style="left:108.40px;top:103.11px;font-size:10.5px;color:#f0f0f0;">Font</div>
<div class="t" style="left:150.20px;top:103.11px;font-size:10.5px;color:#f0f0f0;transform:scaleX(1.0492);transform-origin:left center;">Alignment</div>
<div class="t" style="left:214.60px;top:103.11px;font-size:10.5px;color:#f0f0f0;transform:scaleX(1.0252);transform-origin:left center;">Number</div>
<div class="t" style="left:289.80px;top:75.81px;font-size:10.5px;color:#f0f0f0;transform:scaleX(1.0280);transform-origin:left center;">Conditional Formatting</div>
<div class="t" style="left:289.80px;top:99.11px;font-size:10.5px;color:#f0f0f0;transform:scaleX(0.9814);transform-origin:left center;">Format as Table</div>
<div class="t" style="left:289.80px;top:122.51px;font-size:10.5px;color:#f0f0f0;transform:scaleX(0.9272);transform-origin:left center;">Cell Styles</div>
<div class="t" style="left:330.70px;top:141.60px;font-size:9.8px;color:#f0f0f0;transform:scaleX(0.8506);transform-origin:left center;">Styles</div>
<div class="t" style="left:437.20px;top:103.11px;font-size:10.5px;color:#f0f0f0;transform:scaleX(0.9082);transform-origin:left center;">Cells</div>
<div class="t" style="left:479.90px;top:103.11px;font-size:10.5px;color:#f0f0f0;transform:scaleX(0.9841);transform-origin:left center;">Editing</div>
<div class="t" style="left:529.00px;top:104.91px;font-size:10.5px;color:#f0f0f0;transform:scaleX(1.0391);transform-origin:left center;">Add-ins</div>
<div class="t" style="left:531.70px;top:141.70px;font-size:9.8px;color:#f0f0f0;transform:scaleX(0.9483);transform-origin:left center;">Add-ins</div>
<div class="t" style="left:585.10px;top:105.01px;font-size:10.5px;color:#f0f0f0;transform:scaleX(0.9583);transform-origin:left center;">Analyze</div>
<div class="t" style="left:592.50px;top:119.01px;font-size:10.5px;color:#f0f0f0;transform:scaleX(0.9465);transform-origin:left center;">Data</div>
<div class="t" style="left:7.60px;top:168.63px;font-size:14.5px;color:#f0f0f0;transform:scaleX(0.9409);transform-origin:left center;">G7</div>
<div class="t" style="left:202.00px;top:168.53px;font-size:14.5px;color:#f0f0f0;transform:scaleX(0.9913);transform-origin:left center;">39</div>
<div class="t" style="left:159.00px;top:167.30px;font-size:15px;color:#e6e6e6;font-weight:bold;font-style:italic;font-family:'Liberation Serif', serif;transform:scaleX(0.9600);transform-origin:left center;">fx</div>
<div class="t" style="left:59.16px;top:219.93px;font-size:14.5px;color:#f2f2f2;transform:scaleX(0.9500);transform-origin:center center;">A</div>
<div class="t" style="left:184.16px;top:219.93px;font-size:14.5px;color:#f2f2f2;transform:scaleX(0.9500);transform-origin:center center;">B</div>
<div class="t" style="left:297.26px;top:219.93px;font-size:14.5px;color:#f2f2f2;transform:scaleX(0.9500);transform-origin:center center;">C</div>
<div class="t" style="left:340.16px;top:219.93px;font-size:14.5px;color:#f2f2f2;transform:scaleX(0.9500);transform-origin:center center;">E</div>
<div class="t" style="left:394.57px;top:219.93px;font-size:14.5px;color:#f2f2f2;transform:scaleX(0.9500);transform-origin:center center;">F</div>
<div class="t" style="left:485.36px;top:219.93px;font-size:14.5px;color:#f2f2f2;transform:scaleX(0.9500);transform-origin:center center;">G</div>
<div class="t" style="left:585.26px;top:219.93px;font-size:14.5px;color:#f2f2f2;transform:scaleX(0.9500);transform-origin:center center;">H</div>
<div class="t" style="left:672.48px;top:219.93px;font-size:14.5px;color:#f2f2f2;transform:scaleX(0.9500);transform-origin:center center;">I</div>
<div class="t" style="left:6.96px;top:242.13px;font-size:14.5px;color:#f2f2f2;transform:scaleX(0.9700);transform-origin:center center;">1</div>
<div class="t" style="left:6.96px;top:264.13px;font-size:14.5px;color:#f2f2f2;transform:scaleX(0.9700);transform-origin:center center;">2</div>
<div class="t" style="left:6.96px;top:286.13px;font-size:14.5px;color:#f2f2f2;transform:scaleX(0.9700);transform-origin:center center;">3</div>
<div class="t" style="left:6.96px;top:308.13px;font-size:14.5px;color:#f2f2f2;transform:scaleX(0.9700);transform-origin:center center;">4</div>
<div class="t" style="left:6.96px;top:330.13px;font-size:14.5px;color:#f2f2f2;transform:scaleX(0.9700);transform-origin:center center;">5</div>
<div class="t" style="left:6.96px;top:352.13px;font-size:14.5px;color:#f2f2f2;transform:scaleX(0.9700);transform-origin:center center;">6</div>
<div class="t" style="left:6.96px;top:374.13px;font-size:14.5px;color:#f2f2f2;transform:scaleX(0.9700);transform-origin:center center;">7</div>
<div class="t" style="left:6.96px;top:396.13px;font-size:14.5px;color:#f2f2f2;transform:scaleX(0.9700);transform-origin:center center;">8</div>
<div class="t" style="left:6.96px;top:418.13px;font-size:14.5px;color:#f2f2f2;transform:scaleX(0.9700);transform-origin:center center;">9</div>
<div class="t" style="left:2.93px;top:440.13px;font-size:14.5px;color:#f2f2f2;transform:scaleX(0.9700);transform-origin:center center;">10</div>
<div class="t" style="left:3.47px;top:462.13px;font-size:14.5px;color:#f2f2f2;transform:scaleX(0.9700);transform-origin:center center;">11</div>
<div class="t" style="left:2.93px;top:484.13px;font-size:14.5px;color:#f2f2f2;transform:scaleX(0.9700);transform-origin:center center;">12</div>
<div class="t" style="left:2.93px;top:506.13px;font-size:14.5px;color:#f2f2f2;z-index:1;transform:scaleX(0.9700);transform-origin:center center;">13</div>
<div class="t" style="left:40.30px;top:241.20px;font-size:15px;color:#17344f;-webkit-text-stroke:0.3px currentColor;transform:scaleX(0.9746);transform-origin:left center;">Highlighting Above Average Marks</div>
<div class="t" style="left:388.30px;top:241.20px;font-size:15px;color:#451747;-webkit-text-stroke:0.3px currentColor;transform:scaleX(0.9747);transform-origin:left center;">Highlighting Below Average Marks</div>
<div class="t" style="left:29.70px;top:263.40px;font-size:15px;color:#000;font-weight:bold;transform:scaleX(0.9692);transform-origin:left center;">Name</div>
<div class="t" style="left:105.40px;top:263.40px;font-size:15px;color:#000;font-weight:bold;transform:scaleX(0.9231);transform-origin:left center;">Group A marks</div>
<div class="t" style="left:364.80px;top:263.40px;font-size:15px;color:#000;font-weight:bold;transform:scaleX(0.9814);transform-origin:left center;">Name</div>
<div class="t" style="left:440.60px;top:263.40px;font-size:15px;color:#000;font-weight:bold;transform:scaleX(0.9236);transform-origin:left center;">Group B marks</div>
<div class="t" style="left:29.30px;top:285.20px;font-size:15px;color:#141414;-webkit-text-stroke:0.3px currentColor;transform:scaleX(0.9199);transform-origin:left center;">Joseph</div>
<div class="t" style="left:29.30px;top:307.20px;font-size:15px;color:#141414;-webkit-text-stroke:0.3px currentColor;transform:scaleX(0.9543);transform-origin:left center;">Giana</div>
<div class="t" style="left:29.30px;top:329.20px;font-size:15px;color:#141414;-webkit-text-stroke:0.3px currentColor;transform:scaleX(0.9477);transform-origin:left center;">Ginni</div>
<div class="t" style="left:29.30px;top:351.20px;font-size:15px;color:#141414;-webkit-text-stroke:0.3px currentColor;transform:scaleX(0.9671);transform-origin:left center;">Henry</div>
<div class="t" style="left:29.30px;top:373.20px;font-size:15px;color:#141414;-webkit-text-stroke:0.3px currentColor;transform:scaleX(0.9289);transform-origin:left center;">Trisha</div>
<div class="t" style="left:29.30px;top:395.20px;font-size:15px;color:#141414;-webkit-text-stroke:0.3px currentColor;transform:scaleX(0.8945);transform-origin:left center;">John</div>
<div class="t" style="left:29.30px;top:417.20px;font-size:15px;color:#141414;-webkit-text-stroke:0.3px currentColor;transform:scaleX(0.8794);transform-origin:left center;">Ria</div>
<div class="t" style="left:29.30px;top:439.20px;font-size:15px;color:#141414;-webkit-text-stroke:0.3px currentColor;transform:scaleX(0.9708);transform-origin:left center;">Harry</div>
<div class="t" style="left:29.30px;top:461.20px;font-size:15px;color:#141414;-webkit-text-stroke:0.3px currentColor;">Daniel</div>
<div class="t" style="left:257.10px;top:285.20px;font-size:15px;color:#0a6b14;-webkit-text-stroke:0.3px currentColor;transform:scaleX(0.9588);transform-origin:left center;">98</div>
<div class="t" style="left:257.10px;top:307.20px;font-size:15px;color:#141414;-webkit-text-stroke:0.3px currentColor;transform:scaleX(0.9588);transform-origin:left center;">56</div>
<div class="t" style="left:257.10px;top:329.20px;font-size:15px;color:#141414;-webkit-text-stroke:0.3px currentColor;transform:scaleX(0.9588);transform-origin:left center;">32</div>
<div class="t" style="left:257.10px;top:351.20px;font-size:15px;color:#141414;-webkit-text-stroke:0.3px currentColor;transform:scaleX(0.9588);transform-origin:left center;">23</div>
<div class="t" style="left:257.10px;top:373.20px;font-size:15px;color:#0a6b14;-webkit-text-stroke:0.3px currentColor;transform:scaleX(0.9588);transform-origin:left center;">78</div>
<div class="t" style="left:257.10px;top:395.20px;font-size:15px;color:#0a6b14;-webkit-text-stroke:0.3px currentColor;transform:scaleX(0.9588);transform-origin:left center;">80</div>
<div class="t" style="left:257.10px;top:417.20px;font-size:15px;color:#0a6b14;-webkit-text-stroke:0.3px currentColor;transform:scaleX(0.9588);transform-origin:left center;">87</div>
<div class="t" style="left:257.10px;top:439.20px;font-size:15px;color:#141414;-webkit-text-stroke:0.3px currentColor;transform:scaleX(0.9588);transform-origin:left center;">35</div>
<div class="t" style="left:257.10px;top:461.20px;font-size:15px;color:#141414;-webkit-text-stroke:0.3px currentColor;transform:scaleX(0.9588);transform-origin:left center;">39</div>
<div class="t" style="left:364.60px;top:285.20px;font-size:15px;color:#141414;-webkit-text-stroke:0.3px currentColor;transform:scaleX(0.9646);transform-origin:left center;">Harsh</div>
<div class="t" style="left:364.60px;top:307.20px;font-size:15px;color:#141414;-webkit-text-stroke:0.3px currentColor;transform:scaleX(0.9327);transform-origin:left center;">Anny</div>
<div class="t" style="left:364.60px;top:329.20px;font-size:15px;color:#141414;-webkit-text-stroke:0.3px currentColor;">Alley</div>
<div class="t" style="left:364.60px;top:351.20px;font-size:15px;color:#141414;-webkit-text-stroke:0.3px currentColor;transform:scaleX(0.9402);transform-origin:left center;">Yash</div>
<div class="t" style="left:364.60px;top:373.20px;font-size:15px;color:#141414;-webkit-text-stroke:0.3px currentColor;transform:scaleX(0.9533);transform-origin:left center;">Reema</div>
<div class="t" style="left:364.60px;top:395.20px;font-size:15px;color:#141414;-webkit-text-stroke:0.3px currentColor;transform:scaleX(0.9510);transform-origin:left center;">Farukh</div>
<div class="t" style="left:364.60px;top:417.20px;font-size:15px;color:#141414;-webkit-text-stroke:0.3px currentColor;transform:scaleX(0.9530);transform-origin:left center;">Gennia</div>
<div class="t" style="left:364.60px;top:439.20px;font-size:15px;color:#141414;-webkit-text-stroke:0.3px currentColor;transform:scaleX(0.9285);transform-origin:left center;">Rihan</div>
<div class="t" style="left:526.00px;top:285.20px;font-size:15px;color:#141414;-webkit-text-stroke:0.3px currentColor;transform:scaleX(0.8989);transform-origin:left center;">78</div>
<div class="t" style="left:526.00px;top:307.20px;font-size:15px;color:#141414;-webkit-text-stroke:0.3px currentColor;transform:scaleX(0.8989);transform-origin:left center;">93</div>
<div class="t" style="left:526.00px;top:329.20px;font-size:15px;color:#141414;-webkit-text-stroke:0.3px currentColor;transform:scaleX(0.8989);transform-origin:left center;">91</div>
<div class="t" style="left:526.00px;top:351.20px;font-size:15px;color:#141414;-webkit-text-stroke:0.3px currentColor;transform:scaleX(0.8989);transform-origin:left center;">34</div>
<div class="t" style="left:526.00px;top:373.20px;font-size:15px;color:#141414;-webkit-text-stroke:0.3px currentColor;transform:scaleX(0.8989);transform-origin:left center;">39</div>
<div class="t" style="left:526.00px;top:395.20px;font-size:15px;color:#141414;-webkit-text-stroke:0.3px currentColor;transform:scaleX(0.8989);transform-origin:left center;">47</div>
<div class="t" style="left:526.00px;top:417.20px;font-size:15px;color:#141414;-webkit-text-stroke:0.3px currentColor;transform:scaleX(0.8989);transform-origin:left center;">21</div>
<div class="t" style="left:526.00px;top:439.20px;font-size:15px;color:#141414;-webkit-text-stroke:0.3px currentColor;transform:scaleX(0.8989);transform-origin:left center;">28</div>
<div class="t" style="left:101.80px;top:520.89px;font-size:12.3px;color:#f0f0f0;transform:scaleX(0.9388);transform-origin:left center;">Sheet1</div>
<div class="t" style="left:160.80px;top:517.89px;font-size:12.3px;color:#1a1a1a;-webkit-text-stroke:0.45px #1a1a1a;transform:scaleX(0.9722);transform-origin:left center;">Sheet2</div>
<div class="t" style="left:6.30px;top:545.70px;font-size:9.8px;color:#f0f0f0;transform:scaleX(0.8931);transform-origin:left center;">Ready</div>
<div class="t" style="left:92.20px;top:545.70px;font-size:9.8px;color:#f0f0f0;transform:scaleX(0.9293);transform-origin:left center;">Accessibility: Good to go</div>
<div class="t" style="left:676.70px;top:545.60px;font-size:9.8px;color:#f0f0f0;transform:scaleX(0.8818);transform-origin:left center;">100%</div>
</div></body></html>
